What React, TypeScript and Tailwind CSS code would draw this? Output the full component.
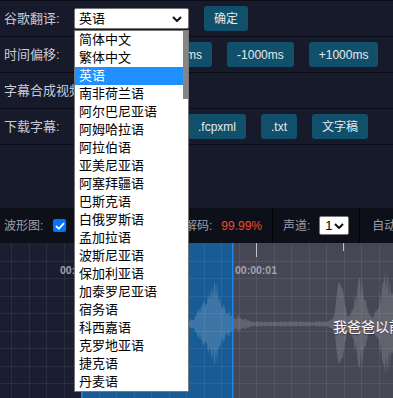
import React from "react";

const LANGS = [
  "简体中文",
  "繁体中文",
  "英语",
  "南非荷兰语",
  "阿尔巴尼亚语",
  "阿姆哈拉语",
  "阿拉伯语",
  "亚美尼亚语",
  "阿塞拜疆语",
  "巴斯克语",
  "白俄罗斯语",
  "孟加拉语",
  "波斯尼亚语",
  "保加利亚语",
  "加泰罗尼亚语",
  "宿务语",
  "科西嘉语",
  "克罗地亚语",
  "捷克语",
  "丹麦语",
];

function Btn({ children, className = "" }: { children: React.ReactNode; className?: string }) {
  return (
    <div
      className={
        "h-[25px] px-[10px] rounded-[3px] bg-[#11506a] text-[#e6e9ee] text-[12px] flex items-center justify-center whitespace-nowrap shrink-0 " +
        className
      }
    >
      {children}
    </div>
  );
}

function Chevron() {
  return (
    <svg width="10" height="6" viewBox="0 0 10 6">
      <path d="M1 1 L5 5 L9 1" fill="none" stroke="#111" strokeWidth="2" />
    </svg>
  );
}

function Label({ children }: { children: React.ReactNode }) {
  return <div className="w-[70px] shrink-0 whitespace-nowrap text-[13px] text-[#c8ccd6]">{children}</div>;
}

function hash(i: number) {
  const s = Math.sin(i * 12.9898 + 4.1) * 43758.5453;
  return s - Math.floor(s);
}

function env(x: number) {
  if (x < 82) return 0;
  const g = (c: number, w: number, a: number) => a * Math.exp(-((x - c) ** 2) / (2 * w * w));
  return (
    3 +
    g(105, 7, 28) +
    g(135, 10, 38) +
    g(165, 8, 26) +
    g(213, 9, 46) +
    g(238, 6, 5) +
    g(340, 4, 42) +
    g(360, 5, 50) +
    g(386, 6, 55)
  );
}

function Waveform() {
  const W = 393;
  const H = 155;
  const C = 81;
  const vlines: number[] = [];
  for (let x = 81 - 17.5 * 4; x < W; x += 17.5) vlines.push(Math.round(x) + 0.5);
  const hlines: number[] = [];
  for (let y = 17.5; y < H; y += 17.5) hlines.push(Math.round(y) + 0.5);

  const top: string[] = [];
  const bot: string[] = [];
  for (let x = 82; x <= W; x += 1) {
    const a = env(x) * (0.45 + 0.55 * hash(x));
    top.push(`${x},${(C - a).toFixed(1)}`);
    bot.unshift(`${x},${(C + a * 0.95).toFixed(1)}`);
  }
  const pts = top.concat(bot).join(" ");

  return (
    <svg width={W} height={H} className="block">
      <rect x="0" y="0" width="81" height={H} fill="#1b1e30" />
      <rect x="81" y="0" width="152" height={H} fill="#185c96" />
      <rect x="233" y="0" width={W - 233} height={H} fill="#464655" />
      {vlines.map((x) => (
        <line key={"v" + x} x1={x} y1="0" x2={x} y2={H} stroke="rgba(255,255,255,0.07)" strokeWidth="1" />
      ))}
      {hlines.map((y) => (
        <line key={"h" + y} x1="0" y1={y} x2={W} y2={y} stroke="rgba(255,255,255,0.07)" strokeWidth="1" />
      ))}
      <polygon points={pts} fill="rgba(255,255,255,0.16)" />
      <rect x="81" y="0" width="1.5" height={H} fill="#1f86e6" />
      <rect x="232" y="0" width="1.5" height={H} fill="#1f86e6" />
      <rect x="81" y="0" width="1" height="14" fill="#c0c0c8" />
      <rect x="168" y="0" width="1" height="8" fill="#c0c0c8" />
      <rect x="256" y="0" width="1" height="14" fill="#c0c0c8" />
      <rect x="343" y="0" width="1" height="8" fill="#c0c0c8" />
    </svg>
  );
}

export default function App() {
  return (
    <div className="relative w-[393px] h-[398px] overflow-hidden bg-[#171a2b] font-['Liberation_Sans','Noto_Sans_CJK_SC',sans-serif]">
      <div className="border-t border-[#0b0d16]">
        {/* Row 1 */}
        <div className="flex items-center h-[36px] border-b border-[#0b0d16] pl-[4px]">
          <Label>谷歌翻译:</Label>
          <div className="flex items-center gap-[15px]">
            <div className="w-[115px] h-[21px] bg-white border border-[#767676] rounded-[2px] flex items-center justify-between pl-[4px] pr-[6px] text-[13px] text-black">
              <span>英语</span>
              <Chevron />
            </div>
            <Btn>确定</Btn>
          </div>
        </div>
        {/* Row 2 */}
        <div className="flex items-center h-[36px] border-b border-[#0b0d16] pl-[4px]">
          <Label>时间偏移:</Label>
          <div className="flex items-center gap-[15px]">
            <Btn>-100ms</Btn>
            <Btn>+100ms</Btn>
            <Btn>-1000ms</Btn>
            <Btn>+1000ms</Btn>
          </div>
        </div>
        {/* Row 3 */}
        <div className="flex items-center h-[36px] border-b border-[#0b0d16] pl-[4px]">
          <div className="whitespace-nowrap text-[13px] text-[#c8ccd6]">字幕合成视频:</div>
        </div>
        {/* Row 4 */}
        <div className="flex items-center h-[36px] border-b border-[#0b0d16] pl-[4px]">
          <Label>下载字幕:</Label>
          <div className="flex items-center gap-[15px]">
            <Btn className="w-[42px]">.srt</Btn>
            <Btn className="w-[42px]">.ass</Btn>
            <Btn>.fcpxml</Btn>
            <Btn>.txt</Btn>
            <Btn>文字稿</Btn>
          </div>
        </div>
      </div>

      <div className="h-[63px]" />

      {/* Toolbar */}
      <div className="flex h-[35px] bg-[#0e1019] text-[12px] text-[#9aa0af] whitespace-nowrap">
        <div className="flex items-center w-[77px] shrink-0 pl-[4px] border-r border-[#030408]">
          <span>波形图:</span>
          <div className="ml-[10px] w-[13px] h-[13px] rounded-[2px] bg-[#0075ff] flex items-center justify-center">
            <svg width="10" height="8" viewBox="0 0 10 8">
              <path d="M1 4 L3.8 6.8 L9 1.2" fill="none" stroke="white" strokeWidth="1.8" />
            </svg>
          </div>
        </div>
        <div className="flex items-center justify-end gap-[9px] w-[196px] shrink-0 pr-[10px] border-r border-[#030408]">
          <span>音频解码:</span>
          <span className="text-[#f2482c]">99.99%</span>
        </div>
        <div className="flex items-center gap-[9px] px-[10px] shrink-0 border-r border-[#030408]">
          <span>声道:</span>
          <div className="w-[30px] h-[19px] bg-white border border-[#767676] rounded-[2px] flex items-center justify-between pl-[5px] pr-[4px] text-[13px] text-black">
            <span>1</span>
            <Chevron />
          </div>
        </div>
        <div className="flex items-center pl-[12px] shrink-0">
          <span>自动滚动</span>
        </div>
      </div>

      {/* Waveform */}
      <div className="relative h-[155px]">
        <Waveform />
        <div className="absolute left-[51px] top-[20px] w-[60px] text-center text-[10.5px] leading-[14px] font-bold text-[#a3a3ad]">
          00:00:00
        </div>
        <div className="absolute left-[226px] top-[20px] w-[60px] text-center text-[10.5px] leading-[14px] font-bold text-[#a3a3ad]">
          00:00:01
        </div>
        <div className="absolute left-[333px] top-[75px] whitespace-nowrap text-[14px] leading-[18px] text-white [text-shadow:0_1px_1px_rgba(0,0,0,0.4)]">
          我爸爸以前是个好人
        </div>
      </div>

      {/* Open select popup */}
      <div className="absolute left-[74px] top-[30px] w-[115px] h-[362px] bg-white border border-[#767676] flex">
        <div className="flex-1 flex flex-col">
          {LANGS.map((l) => (
            <div
              key={l}
              className={
                l === "英语"
                  ? "h-[18px] leading-[18px] pl-[4px] text-[13px] whitespace-nowrap bg-[#1e90ff] text-white"
                  : "h-[18px] leading-[18px] pl-[4px] text-[13px] whitespace-nowrap text-black"
              }
            >
              {l}
            </div>
          ))}
        </div>
        <div className="w-[5px] bg-white">
          <div className="h-[68px] bg-[#858585]" />
        </div>
      </div>
    </div>
  );
}
